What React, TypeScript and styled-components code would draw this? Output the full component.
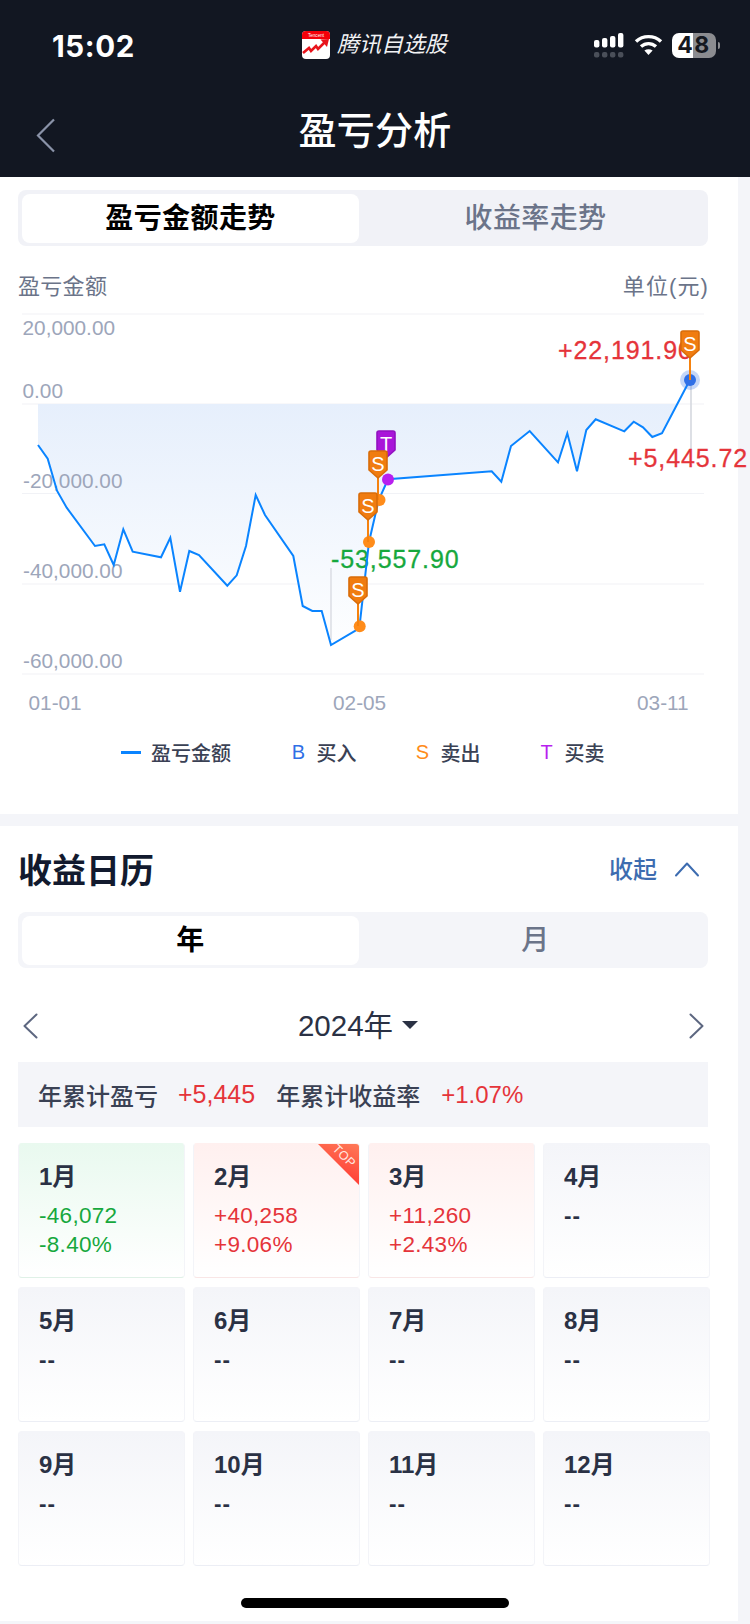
import React from "react";
import styled, { createGlobalStyle } from "styled-components";

const SANS = `"Liberation Sans", "Noto Sans CJK SC", sans-serif`;
const RED = "#e5343a";
const GREEN = "#16a83d";

const Global = createGlobalStyle`
  html, body { margin: 0; padding: 0; background: #f4f5f9; }
  body { font-family: ${SANS}; width: 750px; height: 1624px; overflow: hidden; }
  * { box-sizing: border-box; }
`;

const Page = styled.div`
  width: 750px;
  height: 1624px;
  background: #f4f5f9;
  display: flex;
  flex-direction: column;
`;

const Header = styled.header`
  height: 177px;
  background: #121722;
  color: #fff;
  flex: none;
`;

const StatusBar = styled.div`
  display: grid;
  grid-template-columns: 250px 291px 1fr;
  padding: 31px 0 0 52px;
  height: 100px;
  align-items: start;
`;

const Clock = styled.div`
  font: 700 29.5px/28px Inter, ${SANS};
  margin-top: 1px;
  letter-spacing: 0.6px;
`;

const AppMark = styled.div`
  display: flex;
  align-items: center;
  gap: 7px;
`;

const AppName = styled.span`
  font: italic 400 22px/28px ${SANS};
  color: #f2f3f5;
`;

const Indicators = styled.div`
  display: flex;
  align-items: flex-start;
  margin: -1px 0 0 1px;
`;

const SignalSvg = styled.svg`
  margin-top: 3px;
  margin-right: 10px;
`;

const WifiSvg = styled.svg`
  margin-top: 4px;
  margin-right: 9px;
`;

const Battery = styled.div`
  width: 44px;
  height: 25px;
  margin-top: 3px;
  border-radius: 7px;
  background: linear-gradient(90deg, #fff 0 48%, #8b8c90 48% 100%);
  color: #15181f;
  font: 700 23px/25px Inter, ${SANS};
  text-align: center;
  letter-spacing: 1.6px;
`;

const BatteryCap = styled.div`
  width: 2px;
  height: 7px;
  margin: 12px 0 0 2px;
  border-radius: 0 2px 2px 0;
  background: #8b8c90;
`;

const NavBar = styled.div`
  height: 77px;
  display: grid;
  grid-template-columns: 1fr auto 1fr;
  align-items: start;
`;

const BackSvg = styled.svg`
  margin: 18px 0 0 36px;
`;

const NavTitle = styled.h1`
  margin: 8px 0 0;
  font: 500 38px/46px ${SANS};
  letter-spacing: 0.2px;
  color: #fff;
`;

const Panel = styled.section<{ $height: number }>`
  width: 738px;
  height: ${(p) => p.$height}px;
  background: #fff;
  flex: none;
`;

const TrendPanel = styled(Panel)`
  padding-top: 13px;
`;

const CalendarPanel = styled(Panel)`
  margin-top: 12px;
  padding-top: 23px;
  position: relative;
`;

const Segments = styled.div<{ $bg: string; $top?: number }>`
  margin: ${(p) => p.$top ?? 0}px 0 0 18px;
  width: 690px;
  height: 56px;
  padding: 4px;
  background: ${(p) => p.$bg};
  border-radius: 8px;
  display: grid;
  grid-template-columns: 337px 1fr;
`;

const Segment = styled.div<{ $active?: boolean }>`
  display: flex;
  align-items: center;
  justify-content: center;
  border-radius: 8px;
  font-size: 28px;
  line-height: 48px;
  letter-spacing: 0.4px;
  padding: 1px 0 0 ${(p) => (p.$active ? 0 : 8)}px;
  font-weight: ${(p) => (p.$active ? 700 : 500)};
  color: ${(p) => (p.$active ? "#000" : "#6b7489")};
  background: ${(p) => (p.$active ? "#fff" : "transparent")};
`;

const ChartHead = styled.div`
  margin: 25px 0 0 18px;
  width: 690px;
  display: flex;
  justify-content: space-between;
  font-size: 22px;
  line-height: 32px;
  letter-spacing: 0.3px;
  color: #6b7489;
`;

const UnitLabel = styled.span`
  letter-spacing: 1.1px;
  margin-right: -1px;
`;

const ChartSvg = styled.svg`
  display: block;
  overflow: visible;
  margin-top: 1px;
`;

const AxisText = styled.text`
  font-family: ${SANS};
  font-size: 20.8px;
  fill: #9da6ba;
`;

const ValueText = styled.text<{ $color: string }>`
  font-family: ${SANS};
  font-size: 25px;
  letter-spacing: 0.9px;
  fill: ${(p) => p.$color};
  stroke: ${(p) => p.$color};
  stroke-width: 0.3px;
`;

const PinLetter = styled.text`
  font-family: ${SANS};
  font-size: 20px;
  fill: #fff;
  text-anchor: middle;
`;

const Legend = styled.div`
  display: flex;
  align-items: center;
  gap: 60px;
  padding-left: 121px;
  margin-top: 13px;
  height: 30px;
`;

const LegendItem = styled.div`
  display: flex;
  align-items: center;
  gap: 12px;
  font-size: 20px;
  font-weight: 500;
  color: #3a4154;
  &:first-child {
    margin-right: 1.5px;
  }
`;

const LegendLine = styled.i`
  display: block;
  width: 20px;
  height: 3px;
  margin-right: -2px;
  background: #0a84ff;
`;

const LegendKey = styled.span<{ $color: string }>`
  width: 12px;
  color: ${(p) => p.$color};
  font-size: 20px;
  font-weight: 400;
  display: flex;
  justify-content: center;
`;

const CalendarHead = styled.div`
  display: flex;
  align-items: center;
  justify-content: space-between;
  height: 40px;
  padding: 0 38px 0 18px;
`;

const CalendarTitle = styled.h2`
  margin: 4px 0 0;
  font: 700 34px/40px ${SANS};
  color: #121a2e;
`;

const Collapse = styled.div`
  display: flex;
  align-items: center;
  gap: 17px;
  font-size: 24px;
  font-weight: 500;
  color: #3d6cb0;
`;

const CollapseLabel = styled.span`
  margin-bottom: 4px;
`;

const YearRow = styled.div`
  margin: 43px 0 0 23px;
  width: 681px;
  height: 30px;
  display: flex;
  align-items: center;
  justify-content: space-between;
`;

const YearLabel = styled.div`
  display: flex;
  align-items: center;
  gap: 9px;
  font-size: 29.5px;
  line-height: 30px;
  color: #2a3144;
  margin-left: -11px;
`;

const Caret = styled.i`
  display: block;
  width: 0;
  height: 0;
  margin-top: -3px;
  border-left: 8.5px solid transparent;
  border-right: 8.5px solid transparent;
  border-top: 8.5px solid #2a3144;
`;

const Summary = styled.div`
  margin: 21px 0 0 18px;
  width: 690px;
  height: 65px;
  background: #f4f5f9;
  display: flex;
  align-items: center;
  padding-left: 20px;
  font-size: 24px;
  font-weight: 500;
  color: #3a4154;
`;

const SummaryValue = styled.span<{ $gap: number; $size: number }>`
  color: ${RED};
  font-size: ${(p) => p.$size}px;
  font-weight: 400;
  margin: 0 21px 0 ${(p) => p.$gap}px;
`;

const Months = styled.div`
  margin: 16px 0 0 18px;
  width: 692px;
  display: grid;
  grid-template-columns: repeat(4, 167px);
  grid-auto-rows: 135px;
  column-gap: 8px;
  row-gap: 9px;
`;

const tints = {
  up: { top: "#fff0ef", line: "#f9e6e6" },
  down: { top: "#e9f9ef", line: "#dff1e7" },
  none: { top: "#f4f5f9", line: "#eceef5" },
};

type Tone = keyof typeof tints;

const MonthCard = styled.div<{ $tone: Tone }>`
  position: relative;
  overflow: hidden;
  border: 1px solid #f3f4f8;
  border-bottom-color: ${(p) => tints[p.$tone].line};
  border-top-color: ${(p) => tints[p.$tone].top};
  border-radius: 4px;
  padding: 19px 0 0 20px;
  background: linear-gradient(180deg, ${(p) => tints[p.$tone].top} 0%, #fff 100%);
`;

const MonthName = styled.div`
  font-size: 24px;
  line-height: 28px;
  font-weight: 700;
  color: #2a3144;
`;

const MonthValues = styled.div<{ $tone: Tone }>`
  margin-top: 10px;
  font-size: 22.5px;
  line-height: 29px;
  letter-spacing: ${(p) => (p.$tone === "none" ? 1 : 0.3)}px;
  color: ${(p) => (p.$tone === "up" ? RED : p.$tone === "down" ? GREEN : "#2a3144")};
  font-weight: ${(p) => (p.$tone === "none" ? 700 : 400)};
`;

const TopRibbon = styled.div`
  position: absolute;
  top: 0;
  right: 0;
  width: 41px;
  height: 41px;
  background: linear-gradient(200deg, #ff7a58 0%, #ff2a2a 100%);
  clip-path: polygon(0 0, 100% 0, 100% 100%);
`;

const TopText = styled.span`
  position: absolute;
  top: 5px;
  left: 11px;
  width: 30px;
  transform: rotate(45deg);
  font-size: 12.5px;
  line-height: 14px;
  letter-spacing: 0.4px;
  text-align: center;
  color: #ffe9e2;
`;

const HomeBar = styled.div`
  position: absolute;
  left: 241px;
  bottom: 13px;
  width: 268px;
  height: 10px;
  border-radius: 5px;
  background: #000;
`;

// Daily profit curve, in page-like coordinates (the chart's viewBox starts at y = 304).
const curve: [number, number][] = [
  [38, 445], [47.7, 458.7], [57, 490.7], [66.7, 507.7], [95, 546], [104.3, 544.3],
  [113.7, 565], [123.3, 529.3], [132.7, 551.7], [161, 557.3], [170.3, 537.7],
  [180, 591.7], [189.3, 551], [199, 555], [227.3, 585.7], [236.7, 575.3], [246, 546],
  [255.7, 495], [265, 515], [293.3, 556], [302.7, 606], [312.3, 611], [321.7, 611],
  [331, 645], [359.3, 628.3], [369, 542], [378.7, 500], [388, 479.3], [491.7, 471.3],
  [501.3, 481.7], [511, 446], [529.7, 431], [558, 462.3], [567.3, 433.3], [577, 471.3],
  [586.3, 430], [595.7, 419.3], [624.3, 431.3], [633.7, 421.7], [643, 427.3],
  [652.3, 437], [662, 433.3], [690, 379.7],
];

const linePoints = curve.map(([x, y]) => `${x},${y}`).join(" ");
const areaPoints = [
  "38,404",
  ...curve.filter(([, y]) => y > 404).map(([x, y]) => `${x},${y}`),
  "677,404",
].join(" ");

const gridLines = [314, 404, 493.5, 584, 674];

const axisLabels: [string, number, number][] = [
  ["20,000.00", 22.5, 335],
  ["0.00", 22.5, 398],
  ["-20,000.00", 23, 488],
  ["-40,000.00", 23, 578],
  ["-60,000.00", 23, 668],
];

const Pin = ({ x, y, letter, fill, edge }: { x: number; y: number; letter: string; fill: string; edge: string }) => (
  <g transform={`translate(${x} ${y})`}>
    <path
      d="M3 1H17A2 2 0 0 1 19 3V20L10 28L1 20V3A2 2 0 0 1 3 1Z"
      fill={fill}
      stroke={edge}
      strokeWidth="1.6"
      strokeLinejoin="round"
    />
    <PinLetter x="10" y="21">{letter}</PinLetter>
  </g>
);

const ORANGE = "#f07c10";
const ORANGE_EDGE = "#d96c08";
const DOT = "#ff8c1a";

const TrendChart = () => (
  <ChartSvg width="750" height="420" viewBox="0 304 750 420">
    <defs>
      <linearGradient id="areaFill" gradientUnits="userSpaceOnUse" x1="0" y1="404" x2="0" y2="660">
        <stop offset="0" stopColor="#e6effc" />
        <stop offset="1" stopColor="#ffffff" />
      </linearGradient>
    </defs>
    {gridLines.map((y) => (
      <line key={y} x1="22" x2="704" y1={y} y2={y} stroke="#f1f2f6" strokeWidth="1.2" />
    ))}
    <polygon points={areaPoints} fill="url(#areaFill)" />
    {axisLabels.map(([t, x, y]) => (
      <AxisText key={t} x={x} y={y}>{t}</AxisText>
    ))}
    <AxisText x="28.5" y="709.5">01-01</AxisText>
    <AxisText x="333" y="709.5">02-05</AxisText>
    <AxisText x="637" y="709.5">03-11</AxisText>

    <line x1="331" x2="331" y1="568" y2="640" stroke="#d9dbe2" strokeWidth="1.4" />
    <line x1="691" x2="691" y1="380" y2="449" stroke="#d5d8df" strokeWidth="1.6" />
    <ValueText $color={GREEN} x="331" y="568">-53,557.90</ValueText>
    <ValueText $color={RED} x="558" y="359">+22,191.90</ValueText>
    <ValueText $color={RED} x="628" y="467">+5,445.72</ValueText>

    <polyline points={linePoints} fill="none" stroke="#0a84ff" strokeWidth="2" strokeLinejoin="miter" />

    <circle cx="690" cy="380" r="10" fill="#2f6fe6" opacity="0.28" />
    <circle cx="690" cy="380" r="6" fill="#2f6fe6" />
    <line x1="690" x2="690" y1="358" y2="380" stroke="#f5820f" strokeWidth="2" />
    <Pin x={680} y={330} letter="S" fill={ORANGE} edge={ORANGE_EDGE} />

    <circle cx="388" cy="479.5" r="6" fill="#b81fef" />
    <Pin x={376} y={430} letter="T" fill="#a916d9" edge="#9212c0" />

    <circle cx="379.5" cy="500" r="6" fill={DOT} />
    <line x1="378" x2="378" y1="478" y2="500" stroke="#f5820f" strokeWidth="2" />
    <Pin x={368} y={450} letter="S" fill={ORANGE} edge={ORANGE_EDGE} />

    <circle cx="369" cy="542" r="6" fill={DOT} />
    <line x1="368" x2="368" y1="520" y2="542" stroke="#f5820f" strokeWidth="2" />
    <Pin x={358} y={492} letter="S" fill={ORANGE} edge={ORANGE_EDGE} />

    <circle cx="359.7" cy="626.3" r="6" fill={DOT} />
    <line x1="358" x2="358" y1="604" y2="626" stroke="#f5820f" strokeWidth="2" />
    <Pin x={348} y={576} letter="S" fill={ORANGE} edge={ORANGE_EDGE} />
  </ChartSvg>
);

const Chevron = ({ d, color, w, h, width = 2 }: { d: string; color: string; w: number; h: number; width?: number }) => (
  <svg width={w} height={h} viewBox={`0 0 ${w} ${h}`} fill="none">
    <path d={d} stroke={color} strokeWidth={width} strokeLinecap="round" strokeLinejoin="round" />
  </svg>
);

type Month = { name: string; tone: Tone; lines: string[]; top?: boolean };

const months: Month[] = [
  { name: "1月", tone: "down", lines: ["-46,072", "-8.40%"] },
  { name: "2月", tone: "up", lines: ["+40,258", "+9.06%"], top: true },
  { name: "3月", tone: "up", lines: ["+11,260", "+2.43%"] },
  ...["4月", "5月", "6月", "7月", "8月", "9月", "10月", "11月", "12月"].map(
    (name): Month => ({ name, tone: "none", lines: ["--"] }),
  ),
];

export default function App() {
  return (
    <Page>
      <Global />
      <Header>
        <StatusBar>
          <Clock>15:02</Clock>
          <AppMark>
            <svg width="28" height="28" viewBox="0 0 28 28">
              <rect width="28" height="28" rx="4" fill="#fff" />
              <path d="M0 8V4a4 4 0 0 1 4-4h20a4 4 0 0 1 4 4v4Z" fill="#f40009" />
              <text x="14" y="5.6" fontSize="4.6" fill="#fff" textAnchor="middle" fontFamily="Liberation Sans">Tencent</text>
              <path d="M1 22L7 17L9 20L14 15L16 18L23 11" fill="none" stroke="#e8141c" strokeWidth="2.6" />
              <path d="M18.5 8.6L27 8L25 16Z" fill="#e8141c" />
            </svg>
            <AppName>腾讯自选股</AppName>
          </AppMark>
          <Indicators>
            <SignalSvg width="30" height="25" viewBox="0 0 30 25">
              <g fill="#fff">
                <rect x="0" y="7" width="5.4" height="7.5" rx="2" />
                <rect x="8" y="5" width="5.4" height="9.5" rx="2" />
                <rect x="16" y="3" width="5.4" height="11.5" rx="2" />
                <rect x="24" y="0" width="5.4" height="14.5" rx="2" />
              </g>
              <g fill="#4a4f59">
                <rect x="0" y="19" width="5.4" height="5.5" rx="2" />
                <rect x="8" y="19" width="5.4" height="5.5" rx="2" />
                <rect x="16" y="19" width="5.4" height="5.5" rx="2" />
                <rect x="24" y="19" width="5.4" height="5.5" rx="2" />
              </g>
            </SignalSvg>
            <WifiSvg width="29" height="22" viewBox="0 0 29 22" fill="none" stroke="#fff" strokeWidth="3.4">
              <path d="M2 7.5C9 1 20 1 27 7.5" />
              <path d="M7 12.6C11.5 8.6 17.5 8.6 22 12.6" />
              <path d="M14.5 21L10.4 16.6C12.8 14.9 16.2 14.9 18.6 16.6Z" fill="#fff" stroke="none" />
            </WifiSvg>
            <Battery>48</Battery>
            <BatteryCap />
          </Indicators>
        </StatusBar>
        <NavBar>
          <BackSvg width="20" height="36" viewBox="0 0 20 36">
            <path d="M18 1.5L2 17.5L18 33.5" fill="none" stroke="#8a93a8" strokeWidth="2.2" />
          </BackSvg>
          <NavTitle>盈亏分析</NavTitle>
        </NavBar>
      </Header>

      <TrendPanel $height={637}>
        <Segments $bg="#f1f2f7">
          <Segment $active>盈亏金额走势</Segment>
          <Segment>收益率走势</Segment>
        </Segments>
        <ChartHead>
          <span>盈亏金额</span>
          <UnitLabel>单位(元)</UnitLabel>
        </ChartHead>
        <TrendChart />
        <Legend>
          <LegendItem>
            <LegendLine />
            盈亏金额
          </LegendItem>
          <LegendItem>
            <LegendKey $color="#2f6fe6">B</LegendKey>
            买入
          </LegendItem>
          <LegendItem>
            <LegendKey $color="#ff8c1a">S</LegendKey>
            卖出
          </LegendItem>
          <LegendItem>
            <LegendKey $color="#b81fef">T</LegendKey>
            买卖
          </LegendItem>
        </Legend>
      </TrendPanel>

      <CalendarPanel $height={795}>
        <CalendarHead>
          <CalendarTitle>收益日历</CalendarTitle>
          <Collapse>
            <CollapseLabel>收起</CollapseLabel>
            <Chevron w={26} h={16} d="M2 14.5L13 2.5L24 14.5" color="#3d6cb0" />
          </Collapse>
        </CalendarHead>
        <Segments $bg="#f4f5f9" $top={23}>
          <Segment $active>年</Segment>
          <Segment>月</Segment>
        </Segments>
        <YearRow>
          <Chevron w={15} h={26} d="M13.5 1.5L1.5 13L13.5 24.5" color="#5d6780" />
          <YearLabel>
            2024年
            <Caret />
          </YearLabel>
          <Chevron w={15} h={26} d="M1.5 1.5L13.5 13L1.5 24.5" color="#5d6780" />
        </YearRow>
        <Summary>
          年累计盈亏
          <SummaryValue $gap={20} $size={25}>+5,445</SummaryValue>
          年累计收益率
          <SummaryValue $gap={21} $size={24}>+1.07%</SummaryValue>
        </Summary>
        <Months>
          {months.map((m) => (
            <MonthCard key={m.name} $tone={m.tone}>
              {m.top && (
                <TopRibbon>
                  <TopText>TOP</TopText>
                </TopRibbon>
              )}
              <MonthName>{m.name}</MonthName>
              <MonthValues $tone={m.tone}>
                {m.lines.map((l) => (
                  <div key={l}>{l}</div>
                ))}
              </MonthValues>
            </MonthCard>
          ))}
        </Months>
        <HomeBar />
      </CalendarPanel>
    </Page>
  );
}
